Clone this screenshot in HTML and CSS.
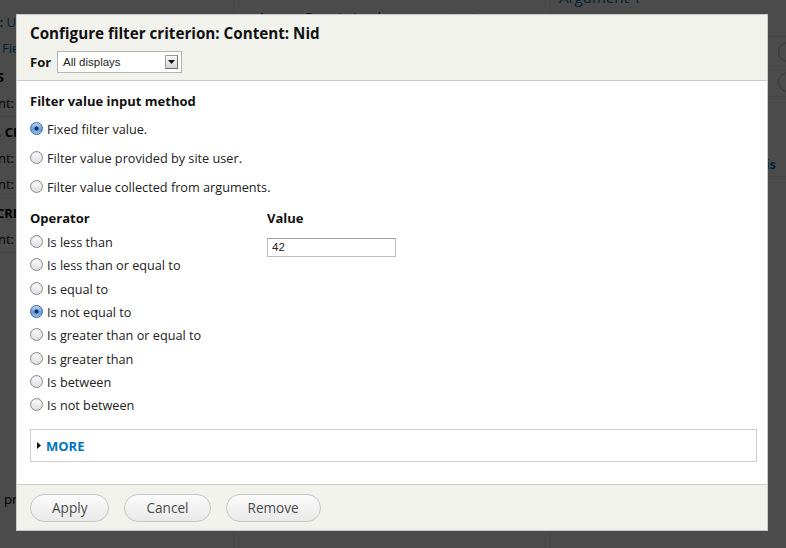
FILE: index.html
```html
<!DOCTYPE html>
<html lang="en">
<head>
<meta charset="utf-8">
<title>Configure filter criterion</title>
<link rel="stylesheet" href="styles.css">
</head>
<body>
<div class="page">
  <div class="side">
    <div class="side-clip">
      <div class="srow s-format"><span class="k">Format:</span> <a>Unformatted list</a></div>
      <div class="srow s-show"><a>Fields</a></div>
      <div class="srow shead s-fields">FIELDS</div>
      <div class="srow sep s-c1"><span class="k">Content:</span> <a>Title</a></div>
      <div class="srow shead s-filter">SORT. CI</div>
      <div class="srow s-c2"><span class="k">Content:</span> <a>Published</a></div>
      <div class="srow sep s-c2"><span class="k">Content:</span> <a>Nid</a></div>
      <div class="srow shead s-sort">CRITERIA</div>
      <div class="srow sep s-c2"><span class="k">Content:</span> <a>Post date</a></div>
      <div class="srow s-foot">preview</div>
    </div>
  </div>
  <div class="main">
    <div class="access-clip">
      <div class="access">Access: <a>Permission</a> | <a>access content</a></div>
    </div>
  </div>
  <div class="aside">
    <div class="arg"><a>Argument 1</a></div>
    <div class="arow"><span class="circ"></span></div>
    <div class="arow"><span class="circ"></span></div>
    <div class="arow tall"><a class="side-link">Analysis</a></div>
  </div>
</div>

<div class="overlay"></div>

<div class="dialog">
  <div class="dlg-head">
    <h1 class="dlg-title">Configure filter criterion: Content: Nid</h1>
    <div class="for-row">
      <span class="for-label">For</span>
      <div class="select">
        <span class="sel-text">All displays</span>
        <span class="sel-btn"><svg width="7" height="4" viewBox="0 0 7 4"><path d="M0 0H7L3.5 4Z" fill="#111"/></svg></span>
      </div>
    </div>
  </div>

  <div class="dlg-body">
    <div class="group-title">Filter value input method</div>
    <div class="radios method">
      <label class="opt"><input type="radio" name="method" checked><span>Fixed filter value.</span></label>
      <label class="opt"><input type="radio" name="method"><span>Filter value provided by site user.</span></label>
      <label class="opt"><input type="radio" name="method"><span>Filter value collected from arguments.</span></label>
    </div>

    <div class="cols">
      <div class="col-op">
        <div class="group-title">Operator</div>
        <div class="radios ops">
          <label class="opt"><input type="radio" name="op"><span>Is less than</span></label>
          <label class="opt"><input type="radio" name="op"><span>Is less than or equal to</span></label>
          <label class="opt"><input type="radio" name="op"><span>Is equal to</span></label>
          <label class="opt"><input type="radio" name="op" checked><span>Is not equal to</span></label>
          <label class="opt"><input type="radio" name="op"><span>Is greater than or equal to</span></label>
          <label class="opt"><input type="radio" name="op"><span>Is greater than</span></label>
          <label class="opt"><input type="radio" name="op"><span>Is between</span></label>
          <label class="opt"><input type="radio" name="op"><span>Is not between</span></label>
        </div>
      </div>
      <div class="col-val">
        <div class="group-title">Value</div>
        <div class="textbox">42</div>
      </div>
    </div>

    <div class="more">
      <svg class="tri" width="4" height="7" viewBox="0 0 4 7"><path d="M0 0L4 3.5L0 7Z" fill="#111"/></svg>
      <a class="more-label">MORE</a>
    </div>
  </div>

  <div class="dlg-foot">
    <button class="btn">Apply</button>
    <button class="btn">Cancel</button>
    <button class="btn">Remove</button>
  </div>
</div>
</body>
</html>
```

FILE: styles.css
```css
html, body {
  margin: 0;
  padding: 0;
  width: 786px;
  height: 548px;
  overflow: hidden;
}

/* ---------- page underneath the modal ---------- */
.page {
  display: flex;
  width: 786px;
  height: 548px;
  background: #fff;
  font-family: "Open Sans", sans-serif;
  font-size: 13px;
  color: #000;
}
.page a { color: #0074bd; }

.side {
  width: 233px;
  flex: none;
}
/* only the strip left of the modal is ever visible */
.side-clip {
  width: 16px;
  height: 100%;
  display: flex;
  flex-direction: column;
  padding-top: 9.5px;
  box-sizing: border-box;
  overflow: hidden;
}
.srow {
  height: 25px;
  line-height: 25px;
  white-space: nowrap;
  border-bottom: 1px solid transparent;
}
.srow.sep { border-bottom-color: #e6e6e6; height: 24.5px; }
.shead { font-weight: bold; margin-top: 3.5px; }
.s-format { margin-left: -44px; }
.s-show { margin-left: 2px; }
.s-fields { margin-left: -39px; }
.s-c1, .s-c2 { margin-left: -38px; }
.s-filter { margin-left: -36px; }
.s-sort { margin-left: -4px; }
.s-foot { margin-top: auto; margin-bottom: 35px; margin-left: 4px; }

.main {
  width: 317px;
  flex: none;
  border-left: 1px solid #eee;
  box-sizing: border-box;
  padding-left: 24px;
}
.access-clip {
  height: 14px;
  overflow: hidden;
}
.access {
  margin-top: 8px;
  line-height: 18px;
  white-space: nowrap;
}

.aside {
  flex: 1;
  min-width: 0;
  overflow: hidden;
  border-left: 1px solid #eee;
  display: flex;
  flex-direction: column;
}
.arg {
  margin-top: -10px;
  height: 47px;
  box-sizing: border-box;
  padding-left: 8px;
  line-height: 14px;
  font-size: 15px;
  border-bottom: 1px solid #e6e6e6;
}
.arow {
  height: 30px;
  box-sizing: border-box;
  border-bottom: 1px solid #e6e6e6;
  display: flex;
  align-items: center;
  padding-left: 227px;
}
.arow.tall {
  height: 80px;
  align-items: flex-end;
  justify-content: flex-end;
  padding: 0 10px 5px 0;
}
.side-link {
  font-weight: bold;
  line-height: 14px;
  white-space: nowrap;
  flex: none;
}
.circ {
  width: 20px;
  height: 20px;
  flex: none;
  border-radius: 50%;
  border: 1px solid #bbb;
  box-sizing: border-box;
}

.overlay {
  position: fixed;
  inset: 0;
  background: rgba(0, 0, 0, 0.705);
}

/* ---------- modal dialog ---------- */
.dialog {
  position: absolute;
  left: 16px;
  top: 14px;
  width: 750px;
  height: 515px;
  border: 1px solid #c9c9c9;
  background: #fff;
  display: flex;
  flex-direction: column;
  font-family: "Open Sans", sans-serif;
  color: #222;
}

.dlg-head {
  height: 66px;
  flex: none;
  box-sizing: border-box;
  background: #f2f2ed;
  border-bottom: 1px solid #cbcbcb;
  padding: 8px 13px 0;
}
.dlg-title {
  margin: 0;
  font-size: 15.2px;
  line-height: 20px;
  font-weight: bold;
  color: #111;
}
.for-row {
  margin-top: 8px;
  display: flex;
  align-items: center;
  gap: 6px;
}
.for-label {
  font-size: 13px;
  font-weight: bold;
  color: #111;
}
.select {
  width: 125px;
  height: 22px;
  box-sizing: border-box;
  border: 1px solid #b4b4b4;
  background: #fff;
  display: flex;
  align-items: center;
  padding: 0 3px 0 5px;
  font-family: "Liberation Sans", sans-serif;
  font-size: 11.5px;
  color: #222;
}
.sel-btn {
  margin-left: auto;
  width: 13px;
  height: 14px;
  box-sizing: border-box;
  border: 1px solid #9c9c9c;
  border-right-color: #6f6f6f;
  border-bottom-color: #6f6f6f;
  background: linear-gradient(#fafafa, #d6d6d6);
  display: flex;
  align-items: center;
  justify-content: center;
}

.dlg-body {
  flex: 1;
  padding: 12px 10px 0 13px;
  box-sizing: border-box;
}
.group-title {
  font-size: 13px;
  font-weight: bold;
  line-height: 16px;
  color: #111;
}

.radios { display: flex; flex-direction: column; }
.method { margin-top: 5px; }
.method .opt { height: 29px; }
.ops { margin-top: 4px; }
.ops .opt { height: 23.34px; }

.opt {
  display: flex;
  align-items: center;
  font-size: 12.7px;
  line-height: 16px;
  color: #222;
  white-space: nowrap;
}
.opt span { padding-top: 1px; }
.opt input {
  appearance: none;
  -webkit-appearance: none;
  margin: 0 4px 0 0;
  width: 13px;
  height: 13px;
  flex: none;
  border-radius: 50%;
  border: 1px solid #8c8c8c;
  box-sizing: border-box;
  background: linear-gradient(#ffffff, #dcdcdc);
  box-shadow: inset 0 1px 1px rgba(0, 0, 0, 0.12);
}
.opt input:checked {
  border-color: #41689a;
  background:
    radial-gradient(circle, #1c2c42 0 1.6px, rgba(28, 44, 66, 0) 2.4px),
    linear-gradient(#bcd8f6, #5f9de0 55%, #8cc0f3);
  box-shadow: none;
}

.cols {
  display: flex;
  margin-top: 9px;
}
.col-op { width: 237px; flex: none; }
.col-val { flex: 1; }
.textbox {
  margin-top: 12.4px;
  width: 129px;
  height: 19px;
  box-sizing: border-box;
  border: 1px solid #bdbdbd;
  border-top-color: #9e9e9e;
  padding: 0 4px;
  font-family: "Liberation Sans", sans-serif;
  font-size: 11.5px;
  line-height: 17px;
  color: #222;
}

.more {
  margin-top: 12.6px;
  height: 33px;
  box-sizing: border-box;
  border: 1px solid #cfcfcf;
  display: flex;
  align-items: center;
  padding-left: 6px;
  gap: 5px;
}
.more-label {
  font-size: 13px;
  font-weight: bold;
  color: #0074bd;
  line-height: 16px;
}

.dlg-foot {
  height: 46px;
  flex: none;
  box-sizing: border-box;
  background: #f2f2ed;
  border-top: 1px solid #cbcbcb;
  padding: 8.7px 13px 0;
  display: flex;
  align-items: flex-start;
  gap: 15px;
}
.btn {
  height: 28px;
  padding: 0 21px;
  border: 1px solid #c6c6c6;
  border-radius: 14px;
  background: linear-gradient(#fbfbfb, #e9e9e9);
  font-family: "Open Sans", sans-serif;
  font-size: 13.6px;
  color: #4b4b4b;
  line-height: 26px;
}
```
